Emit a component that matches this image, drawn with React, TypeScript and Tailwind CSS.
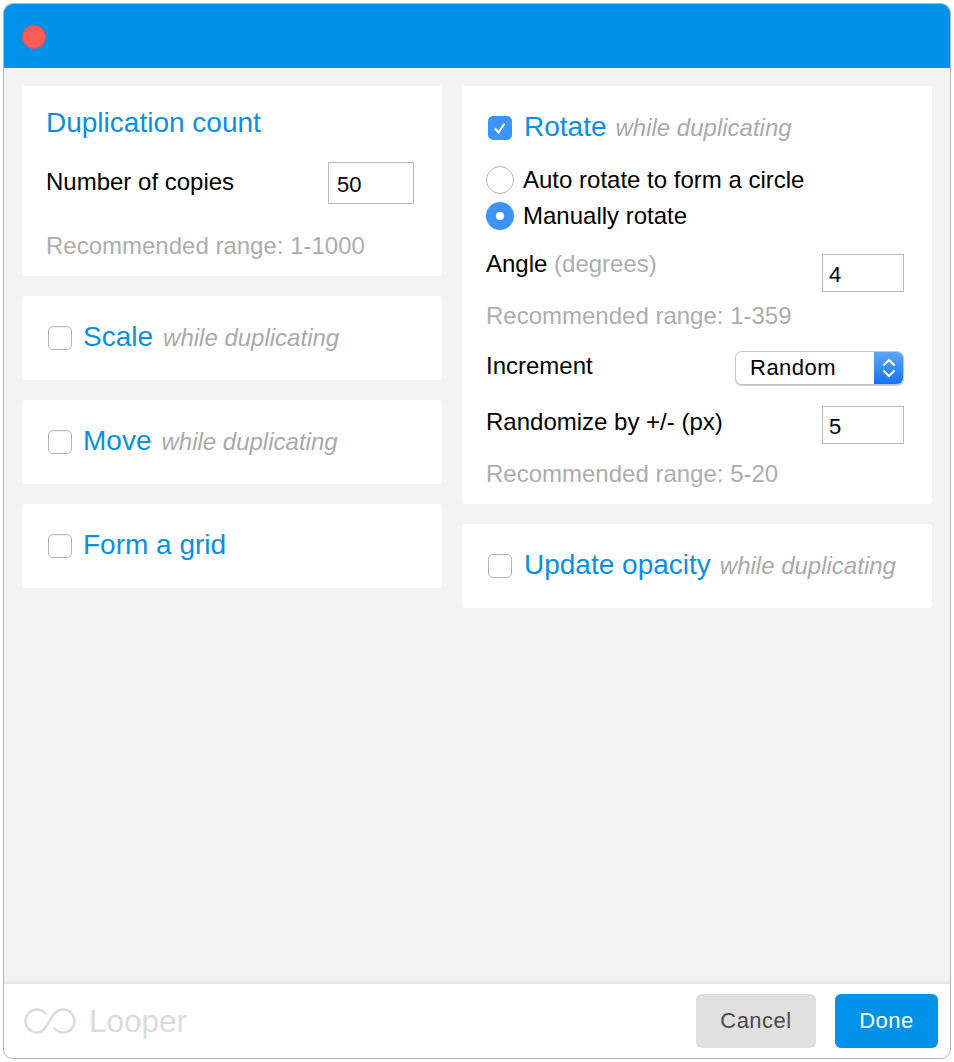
const font = { fontFamily: '"Liberation Sans", Arial, sans-serif' }

function Checkbox({ checked = false }: { checked?: boolean }) {
  if (checked) {
    return (
      <span className="flex h-6 w-6 shrink-0 items-center justify-center rounded-[5px] bg-[#3d94f6]">
        <svg className="h-4 w-4" viewBox="0 0 16 16" fill="none" stroke="white" strokeWidth={2}>
          <path d="M3 8.500l3.500 4 6-9" />
        </svg>
      </span>
    )
  }
  return <span className="h-6 w-6 shrink-0 rounded-[5px] border border-[#b5b5b5] bg-white shadow-[inset_0_1px_1px_rgba(0,0,0,0.06)]" />
}

function Radio({ checked = false }: { checked?: boolean }) {
  if (checked) {
    return (
      <span className="flex h-7 w-7 shrink-0 items-center justify-center rounded-full bg-[#3d94f6]">
        <span className="h-2 w-2 rounded-full bg-white" />
      </span>
    )
  }
  return <span className="h-7 w-7 shrink-0 rounded-full border border-[#b5b5b5] bg-white" />
}

function NumberBox({ value, className }: { value: string; className: string }) {
  return (
    <div className={`flex items-center border border-[#b8b8b8] bg-white pt-[2px] text-[22px] text-black ${className}`}>
      {value}
    </div>
  )
}

function CheckHeading({ title, note, checked, right }: { title: string; note?: string; checked?: boolean; right?: boolean }) {
  return (
    <div className="flex items-center">
      <Checkbox checked={checked} />
      <span className={`mt-[-2px] text-[28px] leading-8 text-[#0a8fe3] ${right ? 'ml-3 mr-[-1px]' : 'ml-[11px]'}`}>{title}</span>
      {note && <span className="ml-[10px] text-[24px] leading-8 italic text-[#aaaaaa]">{note}</span>}
    </div>
  )
}

function Hint({ children }: { children: string }) {
  return <p className="text-[24px] leading-7 text-[#adadad]">{children}</p>
}

function LooperLogo() {
  return (
    <svg className="h-[28px] w-[52px]" viewBox="0 0 52 28" fill="none" stroke="#dcdcdc" strokeWidth={2.500}>
      <path d="M39 2.500C26 2.500 25 25.500 13 25.500a11.500 11.500 0 0 1 0-23c4 0 7 2 9.500 5M29.500 20.500c2.500 3 5.500 5 9.500 5a11.500 11.500 0 0 0 0-23" />
    </svg>
  )
}

export default function App() {
  return (
    <div className="h-[1062px] w-[954px] bg-white p-[3px]" style={font}>
      <div className="flex h-[1056px] w-[948px] flex-col overflow-hidden rounded-[10px] border border-[#b4b4b4] bg-[#f3f3f3]">
        {/* Title bar */}
        <div className="flex h-16 shrink-0 items-center bg-[#0091ea] pl-[18px]">
          <span className="mt-[1px] h-6 w-6 rounded-full border border-[#e5534b] bg-[#fc5b57]" />
        </div>

        {/* Panels */}
        <div className="flex flex-1 gap-5 pl-[18px] pt-[18px]">
          <div className="flex w-[420px] flex-col gap-5">
            <section className="h-[190px] rounded bg-white pl-[24px] pr-7 pt-[21px]">
              <h2 className="text-[28px] leading-8 font-normal text-[#0a8fe3]">Duplication count</h2>
              <div className="mt-[23px] flex items-start justify-between">
                <span className="mt-[6px] text-[24px] leading-7 text-black">Number of copies</span>
                <NumberBox value="50" className="h-[42px] w-[86px] pl-2" />
              </div>
              <div className="mt-[28px]">
                <Hint>Recommended range: 1-1000</Hint>
              </div>
            </section>
            {[
              { title: 'Scale', note: 'while duplicating' },
              { title: 'Move', note: 'while duplicating' },
              { title: 'Form a grid' },
            ].map((row) => (
              <section key={row.title} className="flex h-[84px] items-center rounded bg-white pl-[26px]">
                <CheckHeading title={row.title} note={row.note} />
              </section>
            ))}
          </div>

          <div className="flex w-[470px] flex-col gap-5">
            <section className="h-[418px] rounded bg-white pl-[24px] pr-7 pt-[26px]">
              <div className="pl-[2px]">
                <CheckHeading title="Rotate" note="while duplicating" checked right />
              </div>
              <div className="mt-[22px] flex flex-col gap-[8px] text-[24px] leading-7 text-black">
                <label className="flex items-center gap-[9px]">
                  <Radio />
                  Auto rotate to form a circle
                </label>
                <label className="flex items-center gap-[9px]">
                  <Radio checked />
                  Manually rotate
                </label>
              </div>
              <div className="mt-[10px] flex items-start justify-between">
                <span className="mt-[10px] text-[24px] leading-7 text-black">
                  Angle <span className="text-[#adadad]">(degrees)</span>
                </span>
                <NumberBox value="4" className="mt-[14px] h-[38px] w-[82px] pl-[6px]" />
              </div>
              <div className="mt-[10px]">
                <Hint>Recommended range: 1-359</Hint>
              </div>
              <div className="mt-[21px] flex items-center justify-between">
                <span className="mt-[-5px] text-[24px] leading-7 text-black">Increment</span>
                <div className="flex h-[34px] w-[169px] overflow-hidden rounded-[7px] border border-[#c8c8c8] bg-white shadow-[0_1px_1px_rgba(0,0,0,0.2)]">
                  <span className="flex-1 pl-[14px] text-[22px] leading-8 tracking-[0.5px] text-black">Random</span>
                  <span className="flex w-[29px] items-center justify-center bg-gradient-to-b from-[#5aa6fa] to-[#1273f2]">
                    <svg className="h-6 w-4" viewBox="0 0 16 24" fill="none" stroke="white" strokeWidth={2}>
                      <path d="M2.500 9.500L8 4l5.500 5.500M2.500 14.500L8 20l5.500-5.500" />
                    </svg>
                  </span>
                </div>
              </div>
              <div className="mt-[21px] flex items-start justify-between">
                <span className="mt-[2px] text-[24px] leading-7 text-black">Randomize by +/- (px)</span>
                <NumberBox value="5" className="h-[38px] w-[82px] pl-[6px]" />
              </div>
              <div className="mt-[16px]">
                <Hint>Recommended range: 5-20</Hint>
              </div>
            </section>
            <section className="flex h-[84px] items-center rounded bg-white pl-[26px]">
              <CheckHeading title="Update opacity" note="while duplicating" right />
            </section>
          </div>
        </div>

        {/* Footer */}
        <div className="flex h-[74px] shrink-0 items-center justify-between bg-white pl-5 pr-3 shadow-[0_-1px_6px_rgba(0,0,0,0.1)]">
          <div className="flex items-center gap-[13px]">
            <LooperLogo />
            <span className="text-[31.5px] leading-9 text-[#dcdcdc]">Looper</span>
          </div>
          <div className="flex gap-[19px] text-[22px]">
            <button className="h-[54px] w-[120px] rounded-md bg-[#e0e0e0] pb-[2px] tracking-[0.5px] text-[#4a4a4a]">Cancel</button>
            <button className="h-[54px] w-[103px] rounded-md bg-[#0091ea] pb-[2px] tracking-[0.5px] text-white">Done</button>
          </div>
        </div>
      </div>
    </div>
  )
}
